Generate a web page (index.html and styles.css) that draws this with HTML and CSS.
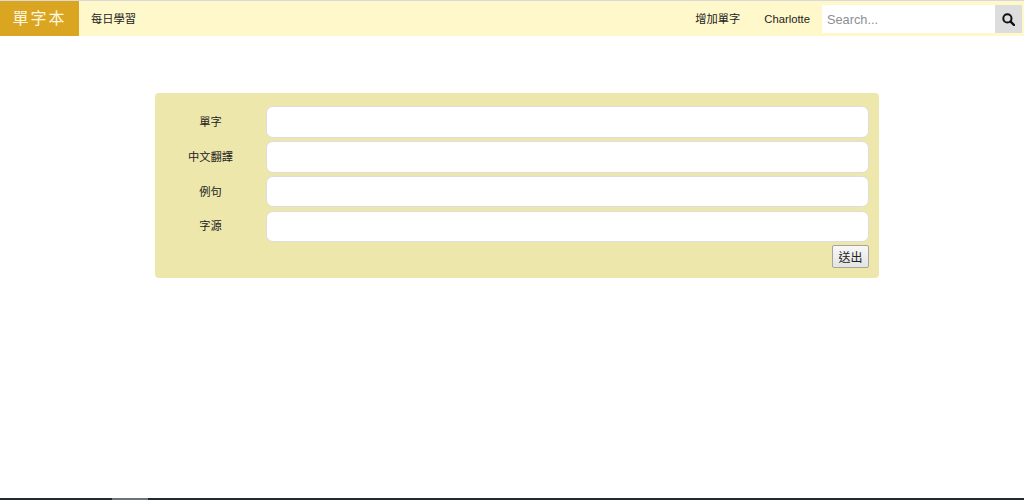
FILE: index.html

```html
<!DOCTYPE html>
<html lang="zh-Hant">
<head>
  <meta charset="UTF-8">
  <meta name="viewport" content="width=device-width, initial-scale=1.0">
  <title>單字本</title>
  <link rel="stylesheet" href="styles.css">
</head>
<body>
  <nav class="navbar">
    <a class="brand" href="#">單字本</a>
    <a class="nav-link first-link" href="#">每日學習</a>
    <div class="nav-right">
      <a class="nav-link" href="#">增加單字</a>
      <a class="nav-link" href="#">Charlotte</a>
      <form class="search">
        <input type="text" placeholder="Search...">
        <button type="button" aria-label="search">
          <svg width="13" height="13" viewBox="0 0 13 13">
            <circle cx="5.4" cy="5.4" r="4.1" fill="none" stroke="#111" stroke-width="2"></circle>
            <path d="M8.6 8.6 L12 12" stroke="#111" stroke-width="2.4" stroke-linecap="round"></path>
          </svg>
        </button>
      </form>
    </div>
  </nav>

  <main class="content">
    <form class="word-form">
      <div class="form-row">
        <label>單字</label>
        <input type="text">
      </div>
      <div class="form-row">
        <label>中文翻譯</label>
        <input type="text">
      </div>
      <div class="form-row">
        <label>例句</label>
        <input type="text">
      </div>
      <div class="form-row">
        <label>字源</label>
        <input type="text">
      </div>
      <div class="form-actions">
        <button type="button">送出</button>
      </div>
    </form>
  </main>

  <div class="bottom-line"><span></span></div>
</body>
</html>
```

FILE: styles.css

```css
* {
  box-sizing: border-box;
  font-family: "Liberation Sans", "Noto Sans CJK TC", sans-serif;
}
html, body {
  height: 100%;
}
body {
  margin: 0;
  display: flex;
  flex-direction: column;
  background: #fff;
  color: #212121;
  font-size: 11.25px;
  overflow: hidden;
}
a {
  color: inherit;
  text-decoration: none;
}
.navbar {
  display: flex;
  align-items: stretch;
  height: 36px;
  border-top: 1px solid #d9d9d9;
  background: #fff8cb;
}
.brand {
  width: 79px;
  background: #daa520;
  color: #fff8e0;
  font-family: "Liberation Serif", "Noto Sans CJK TC", serif;
  font-size: 16px;
  letter-spacing: 2px;
  line-height: 36px;
  text-align: center;
}
.nav-link {
  line-height: 36px;
  padding: 0 12px;
  color: #222;
}
.nav-right {
  display: flex;
  margin-left: auto;
}
.search {
  display: flex;
  height: 28px;
  margin: 4px 2px 0 0;
}
.search input {
  width: 173px;
  border: none;
  outline: none;
  padding: 0 5px;
  font-size: 12.75px;
  background: #fff;
}
.search input::placeholder {
  color: #8a8f94;
}
.search button {
  width: 27px;
  border: none;
  padding: 3px 0 0;
  background: #ddd;
}
.content {
  flex: 1;
  padding: 57px 145px 0 155px;
}
.word-form {
  height: 185px;
  padding: 13.25px 10px 0 0;
  background: #ede7ac;
  border-radius: 4px;
}
.form-row {
  display: flex;
  align-items: center;
  height: 31.5px;
  margin-bottom: 3.25px;
}
.form-row label {
  width: 111px;
  padding-bottom: 2px;
  text-align: center;
  color: #222;
}
.form-row input {
  flex: 1;
  height: 31.5px;
  border: 1px solid #ddd;
  border-radius: 7px;
  background: #fff;
  outline: none;
}
.form-actions {
  display: flex;
  justify-content: flex-end;
}
.form-actions button {
  width: 37px;
  height: 23px;
  padding: 0;
  font-size: 12px;
  color: #222;
  background: linear-gradient(#f8f8f8, #e4e4e4);
  border: 1px solid #a5a5a0;
  border-radius: 2px;
}
.bottom-line {
  height: 2px;
  background: #24292e;
}
.bottom-line span {
  display: block;
  width: 36px;
  height: 2px;
  margin-left: 112px;
  background: #6d7278;
}
```
